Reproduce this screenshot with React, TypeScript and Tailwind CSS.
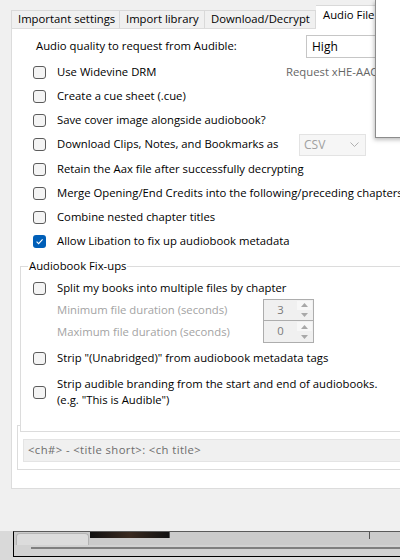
import React from "react";

const font = { fontFamily: '"Open Sans", "Noto Sans", sans-serif' };

function Box({ checked }: { checked?: boolean }) {
  if (checked) {
    return (
      <span className="w-[13px] h-[13px] rounded-[3px] bg-[#005fb8] flex items-center justify-center shrink-0">
        <svg width="9" height="9" viewBox="0 0 9 9">
          <path d="M1.6 4.7 L3.6 6.6 L7.6 2.3" stroke="#ffffff" strokeWidth="1.1" fill="none" />
        </svg>
      </span>
    );
  }
  return <span className="w-[13px] h-[13px] rounded-[3px] border border-[#5c5c5c] bg-[#f4f4f4] shrink-0" />;
}

function Row({ children, checked }: { children: React.ReactNode; checked?: boolean }) {
  return (
    <div className="h-[24.25px] flex items-center pl-[21px] whitespace-nowrap">
      <Box checked={checked} />
      <div className="ml-[11px] flex items-center">{children}</div>
    </div>
  );
}

function Spin({ value, top }: { value: string; top?: boolean }) {
  return (
    <div
      className={`w-[51px] h-[22px] bg-[#f0f0f0] border-x border-b border-[#adadad] flex ${
        top ? "border-t" : ""
      }`}
    >
      <div className="w-[33px] flex items-center justify-center text-[#7a7a7a]">{value}</div>
      <div className="flex flex-col py-[1px] gap-[1px]">
        <div className="w-[15px] flex-1 bg-[#f7f7f7] flex items-center justify-center">
          <svg width="7" height="4" viewBox="0 0 7 4">
            <path d="M0 4 L3.5 0 L7 4 Z" fill="#a8a8a8" />
          </svg>
        </div>
        <div className="w-[15px] flex-1 bg-[#f0f0f0] flex items-center justify-center">
          <svg width="7" height="4" viewBox="0 0 7 4">
            <path d="M0 0 L7 0 L3.5 4 Z" fill="#a8a8a8" />
          </svg>
        </div>
      </div>
    </div>
  );
}

export default function App() {
  const tabs = [
    { label: "Important settings", w: "w-[109px]" },
    { label: "Import library", w: "w-[85px]" },
    { label: "Download/Decrypt", w: "w-[111px]" },
  ];

  return (
    <div className="w-[400px] h-[560px] bg-[#f0f0f0] relative overflow-hidden text-[11.3px] text-black" style={font}>
      {/* tab strip */}
      <div className="h-[28px] flex items-end pl-[11px]">
        {tabs.map((t, i) => (
          <div
            key={t.label}
            className={`${t.w} h-[18px] border-t border-r ${i === 0 ? "border-l" : ""} border-[#d9d9d9] bg-[#f0f0f0] px-[6px] flex items-center whitespace-nowrap`}
          >
            {t.label}
          </div>
        ))}
        <div className="w-[80px] h-[24px] -mb-px relative z-10 border-t border-r border-[#d9d9d9] bg-white pl-[7px] pb-[4px] flex items-center whitespace-nowrap overflow-hidden">
          Audio File Settings
        </div>
      </div>

      {/* tab page */}
      <div className="ml-[11px] w-[400px] h-[461px] border border-[#dcdcdc] bg-white">
        <div className="mt-[6px] h-[23px] flex items-center pl-[24px] whitespace-nowrap">
          <span className="w-[270px]">Audio quality to request from Audible:</span>
          <div className="w-[100px] h-[23px] border border-[#c6c6c6] bg-white flex items-center pl-[5px] text-[12px]">
            High
          </div>
        </div>

        <div className="mt-[2px]">
          <Row>
            <span className="w-[229px]">Use Widevine DRM</span>
            <span className="text-[#666666]">Request xHE-AAC codec</span>
          </Row>
          <Row>Create a cue sheet (.cue)</Row>
          <Row>Save cover image alongside audiobook?</Row>
          <Row>
            <span className="w-[242px]">Download Clips, Notes, and Bookmarks as</span>
            <div className="w-[67px] h-[22px] border border-[#e3e3e3] bg-[#f6f6f6] flex items-center justify-between pl-[4px] pr-[6px] text-[#a0a0a0] text-[12px]">
              CSV
              <svg width="9" height="5" viewBox="0 0 9 5">
                <path d="M0.5 0.5 L4.5 4.5 L8.5 0.5" stroke="#b0b0b0" strokeWidth="1" fill="none" />
              </svg>
            </div>
          </Row>
          <Row>Retain the Aax file after successfully decrypting</Row>
          <Row>Merge Opening/End Credits into the following/preceding chapters</Row>
          <Row>Combine nested chapter titles</Row>
          <Row checked>Allow Libation to fix up audiobook metadata</Row>
        </div>

        {/* Audiobook Fix-ups */}
        <fieldset className="relative z-10 mt-[4px] ml-[8px] w-[400px] border border-[#dcdcdc] bg-white pb-[23px]">
          <legend className="ml-[7px] px-[1px] leading-[16px]">Audiobook Fix-ups</legend>
          <div className="mt-[3px] h-[22px] flex items-center pl-[12px] gap-[11px] whitespace-nowrap">
            <Box />
            Split my books into multiple files by chapter
          </div>
          <div className="h-[22px] flex items-center pl-[36px] whitespace-nowrap text-[#a3a3a3]">
            <span className="w-[206px]">Minimum file duration (seconds)</span>
            <Spin value="3" top />
          </div>
          <div className="h-[22px] flex items-center pl-[36px] whitespace-nowrap text-[#a3a3a3]">
            <span className="w-[206px]">Maximum file duration (seconds)</span>
            <Spin value="0" />
          </div>
          <div className="mt-[3px] h-[24px] flex items-center pl-[12px] gap-[11px] whitespace-nowrap">
            <Box />
            Strip "(Unabridged)" from audiobook metadata tags
          </div>
          <div className="mt-[6px] h-[32px] flex items-center pl-[12px] gap-[11px] whitespace-nowrap">
            <Box />
            <div className="leading-[16px]">
              <div>Strip audible branding from the start and end of audiobooks.</div>
              <div>(e.g. "This is Audible")</div>
            </div>
          </div>
        </fieldset>

        {/* chapter title template */}
        <div className="-mt-[7px] ml-[5px] w-[400px] h-[45px] border border-[#dcdcdc] pt-[13px] pl-[5px]">
          <div className="h-[23px] border border-[#e4e4e4] bg-[#f0f0f0] flex items-center pl-[4px] text-[#6d6d6d] whitespace-nowrap tracking-[0.4px]">
            &lt;ch#&gt; - &lt;title short&gt;: &lt;ch title&gt;
          </div>
        </div>
      </div>

      {/* window behind, peeking at the bottom */}
      <div className="mt-[42px] h-[29px] flex">
        <div className="w-[13px] bg-[#d9d9d9]" />
        <div className="flex-1 flex flex-col">
          <div className="h-[26px] border-l border-t border-b border-l-black border-t-[#5a5a5a] border-b-black bg-[#d2d2d2] flex flex-col">
            <div className="h-[13px] flex items-start bg-[#cbcbcb]">
              <div className="ml-[2px] mt-[1px] w-[73px] h-[12px] rounded-t-[4px] border-t border-x border-[#b4b4b4] bg-[#dcdcdc]" />
              <div className="ml-[1px] w-[80px] h-[6px] bg-gradient-to-r from-[#111] via-[#3a2a20] to-[#111] border-r border-[#555]" />
              <div className="ml-[199px] w-px h-[7px] bg-[#555]" />
            </div>
            <div className="mt-[2px] ml-[17px] h-[2px] bg-[#7f7f7f]" />
          </div>
          <div className="flex-1 bg-[#dedede]" />
        </div>
      </div>

      {/* dialog overlapping on the top right */}
      <div className="absolute z-20 left-[375px] top-0 w-[40px] h-[138px] bg-white border-l border-b border-[#8c8c8c] shadow-[-1px_2px_4px_rgba(0,0,0,0.25)]" />
    </div>
  );
}
